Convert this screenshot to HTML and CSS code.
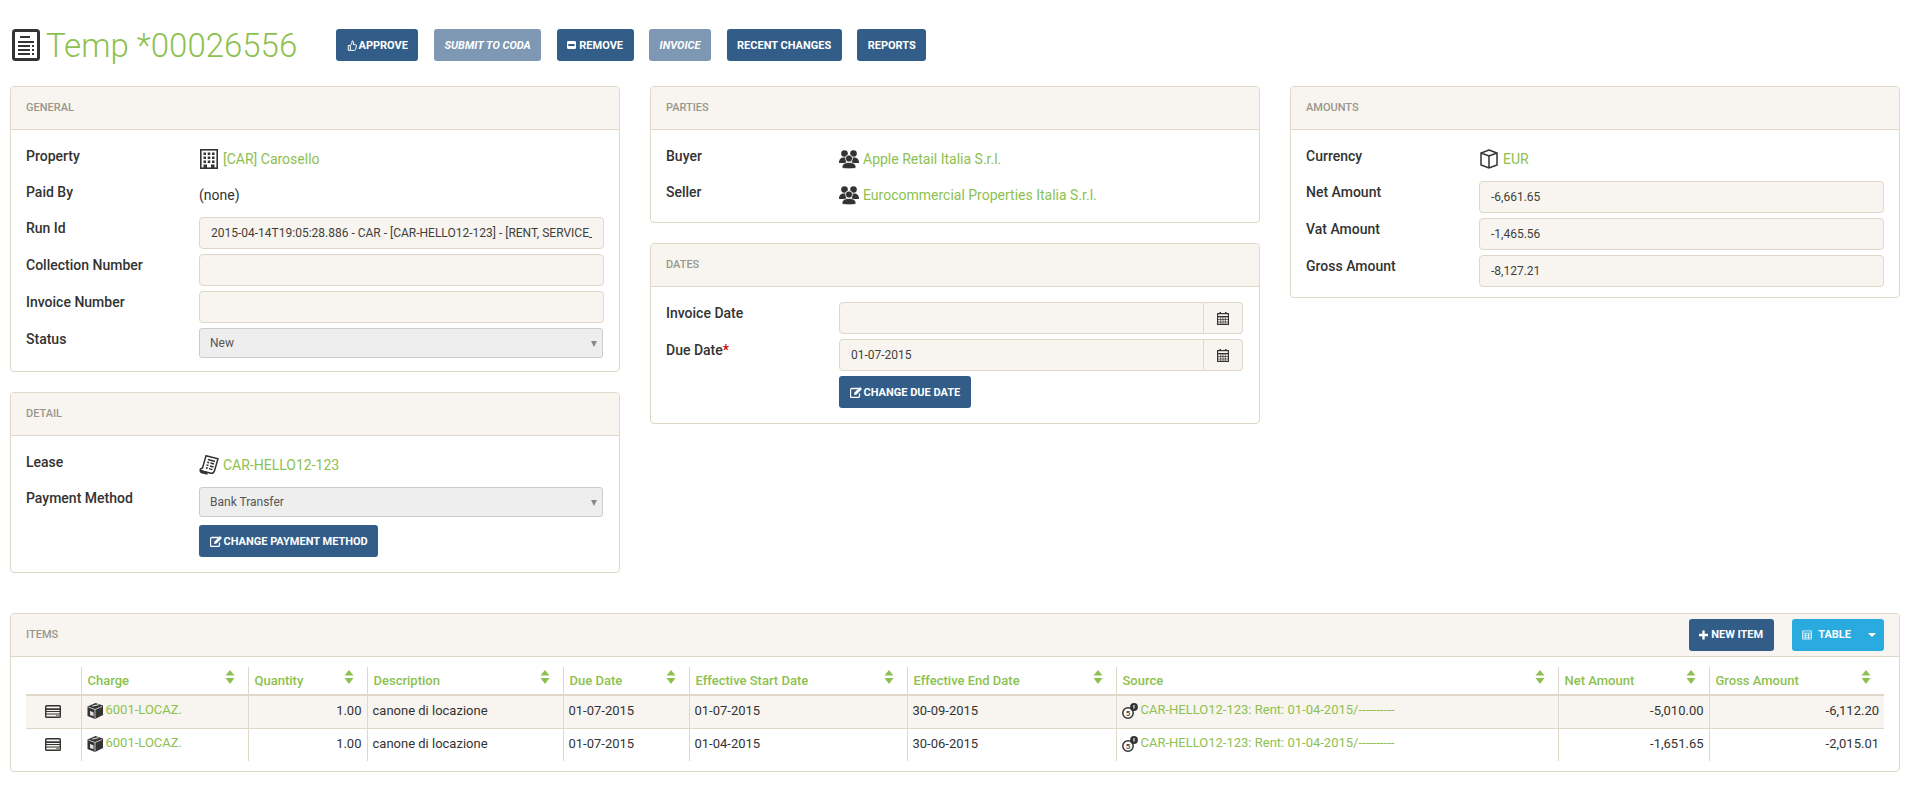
FILE: index.html
```html
<!DOCTYPE html>
<html lang="en">
<head>
<meta charset="UTF-8" />
<meta name="viewport" content="width=device-width, initial-scale=1" />
<title>Temp *00026556</title>
<link rel="stylesheet" href="styles.css">
</head>
<body>
  <svg class="icon-defs" aria-hidden="true">
    <symbol id="i-doc" viewBox="0 0 28 32">
      <rect x="1.500" y="1.500" width="25" height="29" rx="2" fill="none" stroke="#333" stroke-width="3"/>
      <path d="M8 8h10M6 13h16M6 17h12M20 17h2M6 21h12M20 21h2M6 25h12M20 25h2" stroke="#333" stroke-width="2" fill="none"/>
    </symbol>
    <symbol id="i-building" viewBox="0 0 20 20">
      <rect x="1.800" y=".8" width="16.400" height="18.400" fill="none" stroke="#333" stroke-width="1.600"/>
      <path d="M4.500 3.500h2.500v2.500H4.500zM8.700 3.500h2.600v2.500H8.700zM13 3.500h2.500v2.500H13zM4.500 7.500h2.500V10H4.500zM8.700 7.500h2.600V10H8.700zM13 7.500h2.500V10H13zM4.500 11.500h2.500V14H4.500zM8.700 11.500h2.600V14H8.700zM13 11.500h2.500V14H13zM4.500 15.500H8V19H4.500zM12 15.500h3.500V19H12z" fill="#333"/>
    </symbol>
    <symbol id="i-people" viewBox="0 0 20 20">
      <circle cx="5.500" cy="4.500" r="3.300" fill="#333"/>
      <circle cx="14.500" cy="4.500" r="3.300" fill="#333"/>
      <path d="M0 14c0-4 2-5.500 5-5.500S7 10 7 12v2zM20 14c0-4-2-5.500-5-5.500S13 10 13 12v2z" fill="#333"/>
      <circle cx="10" cy="9.500" r="3.600" fill="#333" stroke="#fff" stroke-width=".8"/>
      <path d="M3 19c0-4.500 3-5.500 7-5.500s7 1 7 5.500c-3 1-11 1-14 0z" fill="#333" stroke="#fff" stroke-width=".7"/>
    </symbol>
    <symbol id="i-lease" viewBox="0 0 20 20">
      <path d="M7 .8l12 3-3.500 12c-.5 1.700-1.700 2.700-3.500 2.500L2.500 16c-1-.3-1.500-1-1-2l2-1z" fill="#fff" stroke="#333" stroke-width="1.500"/>
      <path d="M9 4.500l7 2M8.200 7.200l2 .5M11.500 8l3.500 1M7.500 10l2 .5M11 11l3.500 1M6.800 12.800l2 .5M10 13.700l3.500 1" stroke="#333" stroke-width="1.400"/>
      <path d="M.8 14.500l7 2.300c1 .4 1 2 .5 3L3 18.500c-2-.5-3-2.200-2.200-4z" fill="#333"/>
    </symbol>
    <symbol id="i-cube" viewBox="0 0 20 20">
      <path d="M10 1l8 3v12l-8 3-8-3V4zM2 4l8 3 8-3M10 7v12" fill="none" stroke="#333" stroke-width="1.500"/>
    </symbol>
    <symbol id="i-box" viewBox="0 0 16 16">
      <path d="M8.500 0L16 2.500v9.500L8 16 .5 13V3.500z" fill="#333"/>
      <path d="M1.500 4L8 6.500 15 3.500M8 6.500V15.500" stroke="#fff" stroke-width=".7" fill="none"/>
      <path d="M3 8l3.500 1.300v4L3 12zM4.500 2.800l6.500-1.500 1.500.6-6.500 1.600z" fill="#ddd"/>
    </symbol>
    <symbol id="i-coins" viewBox="0 0 16 16">
      <circle cx="6" cy="10" r="5.200" fill="#fff" stroke="#333" stroke-width="1.500"/>
      <text x="6" y="12.700" class="coin-digit">5</text>
      <circle cx="12" cy="4" r="3.900" fill="#333"/>
      <path d="M12 2v3.600" stroke="#fff" stroke-width="1.100"/>
    </symbol>
    <symbol id="i-rows" viewBox="0 0 16 13">
      <rect x=".7" y=".7" width="14.600" height="11.600" rx=".8" fill="#f8f5f0" stroke="#333" stroke-width="1.400"/>
      <path d="M1 3.300h14v1.700H1z" fill="#333"/>
      <path d="M1 6.500h14M1 9h14" stroke="#333"/>
      <path d="M11 10.500h3" stroke="#888"/>
    </symbol>
    <symbol id="i-sort" viewBox="0 0 10 14">
      <path d="M5 0l4.500 5.500h-9zM.5 8h9L5 14z" fill="#8dc14f"/>
    </symbol>
    <symbol id="i-cal" viewBox="0 0 12 13">
      <path d="M2.500 0h1.500v2H2.500zM8 0h1.500v2H8z" fill="#333"/>
      <rect x=".6" y="1.600" width="10.800" height="10.800" fill="none" stroke="#333" stroke-width="1.200"/>
      <path d="M1 4h10v1.300H1z" fill="#333"/>
      <path d="M1 7.500h10M1 10h10M3.700 5v7M6 5v7M8.300 5v7" stroke="#333" stroke-width=".7"/>
    </symbol>
    <symbol id="i-thumb" viewBox="0 0 12 14">
      <path d="M1.500 7h2.500v5.800H1.500zM4 7l2-3V1.500c1.500 0 2 1 2 2.200L7.500 6h2.800c.9 0 1.200.7 1 1.500l-1 4.300c-.2.700-.6 1-1.300 1H4" fill="none" stroke="#fff" stroke-width="1.200"/>
    </symbol>
    <symbol id="i-minus" viewBox="0 0 10 10">
      <path d="M1.500.5h7A1.500 1.500 0 0 1 10 2v6a1.500 1.500 0 0 1-1.500 1.500h-7A1.500 1.500 0 0 1 0 8V2A1.500 1.500 0 0 1 1.500.5zM1.500 4v2h7V4z" fill="#fff" fill-rule="evenodd"/>
    </symbol>
    <symbol id="i-edit" viewBox="0 0 12 11">
      <path d="M8.500 1.500H2c-1 0-1.500.5-1.500 1.500v6c0 1 .5 1.500 1.500 1.500h6c1 0 1.500-.5 1.500-1.500V6.500" fill="none" stroke="#fff" stroke-width="1.300"/>
      <path d="M10 0l2 2-5.500 5.500L4 8l.5-2.500z" fill="#fff"/>
    </symbol>
    <symbol id="i-plus" viewBox="0 0 10 10">
      <path d="M3.700 0h2.600v3.700H10v2.600H6.300V10H3.700V6.300H0V3.700h3.700z" fill="#fff"/>
    </symbol>
    <symbol id="i-table" viewBox="0 0 11 10">
      <path d="M.5.500h10v9H.5zM.5 3h10M.5 5.200h10M.5 7.400h10M3.800 3v6.500M7.200 3v6.500" fill="none" stroke="#fff" stroke-width=".8"/>
    </symbol>
  </svg>

  <div class="page">
    <div class="title-bar">
      <h1><svg class="title-icon"><use href="#i-doc"/></svg>Temp *00026556</h1>
      <div class="actions">
        <a class="btn"><svg class="btn-icon thumb"><use href="#i-thumb"/></svg>Approve</a>
        <a class="btn disabled">Submit to Coda</a>
        <a class="btn"><svg class="btn-icon small"><use href="#i-minus"/></svg>Remove</a>
        <a class="btn disabled">Invoice</a>
        <a class="btn">Recent Changes</a>
        <a class="btn">Reports</a>
      </div>
    </div>

    <div class="columns">
      <div class="column">
        <div class="panel">
          <div class="panel-heading"><span>General</span></div>
          <div class="panel-body">
            <div class="field"><label>Property</label><div class="value"><svg class="obj-icon"><use href="#i-building"/></svg><a>[CAR] Carosello</a></div></div>
            <div class="field"><label>Paid By</label><div class="value">(none)</div></div>
            <div class="field"><label>Run Id</label><input type="text" readonly value="2015-04-14T19:05:28.886 - CAR - [CAR-HELLO12-123] - [RENT, SERVICE_CHARGE] - 2015-04-01"></div>
            <div class="field"><label>Collection Number</label><input type="text" readonly></div>
            <div class="field"><label>Invoice Number</label><input type="text" readonly></div>
            <div class="field"><label>Status</label><div class="select">New</div></div>
          </div>
        </div>

        <div class="panel">
          <div class="panel-heading"><span>Detail</span></div>
          <div class="panel-body">
            <div class="field"><label>Lease</label><div class="value"><svg class="obj-icon"><use href="#i-lease"/></svg><a>CAR-HELLO12-123</a></div></div>
            <div class="field"><label>Payment Method</label><div class="select">Bank Transfer</div></div>
            <div class="field"><label></label><div><a class="btn"><svg class="btn-icon"><use href="#i-edit"/></svg>Change Payment Method</a></div></div>
          </div>
        </div>
      </div>

      <div class="column">
        <div class="panel">
          <div class="panel-heading"><span>Parties</span></div>
          <div class="panel-body">
            <div class="field"><label>Buyer</label><div class="value"><svg class="obj-icon"><use href="#i-people"/></svg><a>Apple Retail Italia S.r.l.</a></div></div>
            <div class="field"><label>Seller</label><div class="value"><svg class="obj-icon"><use href="#i-people"/></svg><a>Eurocommercial Properties Italia S.r.l.</a></div></div>
          </div>
        </div>

        <div class="panel">
          <div class="panel-heading"><span>Dates</span></div>
          <div class="panel-body">
            <div class="field"><label>Invoice Date</label><div class="date-group"><input type="text" readonly><span class="addon"><svg class="cal-icon"><use href="#i-cal"/></svg></span></div></div>
            <div class="field"><label>Due Date<em>*</em></label><div class="date-group"><input type="text" readonly value="01-07-2015"><span class="addon"><svg class="cal-icon"><use href="#i-cal"/></svg></span></div></div>
            <div class="field"><label></label><div><a class="btn"><svg class="btn-icon"><use href="#i-edit"/></svg>Change Due Date</a></div></div>
          </div>
        </div>
      </div>

      <div class="column">
        <div class="panel">
          <div class="panel-heading"><span>Amounts</span></div>
          <div class="panel-body">
            <div class="field"><label>Currency</label><div class="value"><svg class="obj-icon"><use href="#i-cube"/></svg><a>EUR</a></div></div>
            <div class="field"><label>Net Amount</label><input type="text" readonly value="-6,661.65"></div>
            <div class="field"><label>Vat Amount</label><input type="text" readonly value="-1,465.56"></div>
            <div class="field"><label>Gross Amount</label><input type="text" readonly value="-8,127.21"></div>
          </div>
        </div>
      </div>
    </div>

    <div class="panel items">
      <div class="panel-heading">
        <span>Items</span>
        <div class="heading-actions">
          <a class="btn"><svg class="btn-icon small"><use href="#i-plus"/></svg>New Item</a>
          <a class="btn btn-info"><svg class="btn-icon small"><use href="#i-table"/></svg>Table<i class="caret"></i></a>
        </div>
      </div>
      <div class="table-wrap">
        <table>
          <colgroup>
            <col class="c-icon"><col class="c-charge"><col class="c-qty"><col class="c-desc"><col class="c-due">
            <col class="c-start"><col class="c-end"><col class="c-source"><col class="c-net"><col class="c-gross">
          </colgroup>
          <thead>
            <tr>
              <th></th>
              <th><div class="th-in">Charge<svg class="sort"><use href="#i-sort"/></svg></div></th>
              <th><div class="th-in">Quantity<svg class="sort"><use href="#i-sort"/></svg></div></th>
              <th><div class="th-in">Description<svg class="sort"><use href="#i-sort"/></svg></div></th>
              <th><div class="th-in">Due Date<svg class="sort"><use href="#i-sort"/></svg></div></th>
              <th><div class="th-in">Effective Start Date<svg class="sort"><use href="#i-sort"/></svg></div></th>
              <th><div class="th-in">Effective End Date<svg class="sort"><use href="#i-sort"/></svg></div></th>
              <th><div class="th-in">Source<svg class="sort"><use href="#i-sort"/></svg></div></th>
              <th><div class="th-in">Net Amount<svg class="sort"><use href="#i-sort"/></svg></div></th>
              <th><div class="th-in">Gross Amount<svg class="sort"><use href="#i-sort"/></svg></div></th>
            </tr>
          </thead>
          <tbody>
            <tr class="odd">
              <td class="center"><svg class="rows-icon"><use href="#i-rows"/></svg></td>
              <td><svg class="cell-icon"><use href="#i-box"/></svg><a>6001-LOCAZ.</a></td>
              <td class="num">1.00</td>
              <td>canone di locazione</td>
              <td>01-07-2015</td>
              <td>01-07-2015</td>
              <td>30-09-2015</td>
              <td><svg class="cell-icon"><use href="#i-coins"/></svg><a>CAR-HELLO12-123: Rent: 01-04-2015/----------</a></td>
              <td class="num">-5,010.00</td>
              <td class="num">-6,112.20</td>
            </tr>
            <tr>
              <td class="center"><svg class="rows-icon"><use href="#i-rows"/></svg></td>
              <td><svg class="cell-icon"><use href="#i-box"/></svg><a>6001-LOCAZ.</a></td>
              <td class="num">1.00</td>
              <td>canone di locazione</td>
              <td>01-07-2015</td>
              <td>01-04-2015</td>
              <td>30-06-2015</td>
              <td><svg class="cell-icon"><use href="#i-coins"/></svg><a>CAR-HELLO12-123: Rent: 01-04-2015/----------</a></td>
              <td class="num">-1,651.65</td>
              <td class="num">-2,015.01</td>
            </tr>
          </tbody>
        </table>
      </div>
    </div>
  </div>
</body>
</html>
```

FILE: styles.css
```css
* {
  box-sizing: border-box;
}
body {
  margin: 0;
  background: #fff;
  color: #333;
  font-family: Roboto, "Liberation Sans", sans-serif;
  font-size: 13px;
}
a {
  color: #8dc14f;
  text-decoration: none;
}
.icon-defs {
  display: none;
}
.page {
  padding: 29px 6px 15px 10px;
}

/* title row */
.title-bar {
  display: flex;
  align-items: center;
  height: 32px;
  margin-bottom: 25px;
}
h1 {
  display: flex;
  align-items: center;
  width: 326px;
  margin: 0;
  padding-left: 2px;
  color: #8dc14f;
  font-size: 33px;
  font-weight: 300;
  white-space: nowrap;
}
.title-icon {
  width: 28px;
  height: 32px;
  margin-right: 6px;
}
.actions {
  display: flex;
  gap: 15.5px;
}
.btn {
  display: inline-flex;
  align-items: center;
  height: 32px;
  padding: 0 10.5px;
  background: #325d88;
  border-radius: 3px;
  color: #fff;
  font-size: 11px;
  font-weight: 700;
  text-transform: uppercase;
  white-space: nowrap;
}
.btn.disabled {
  background: #7e97b3;
  font-style: italic;
}
.btn-info {
  background: #29abe0;
  padding-right: 8px;
}
.btn-icon {
  width: 12px;
  height: 11px;
  margin-right: 2px;
}
.btn-icon.thumb {
  width: 10px;
  height: 13px;
  margin-right: 2px;
}
.btn-icon.small {
  width: 9px;
  height: 10px;
  margin-right: 3px;
}
.btn-info .btn-icon.small {
  width: 10px;
  margin-right: 6px;
}
.caret {
  width: 0;
  height: 0;
  margin-left: 17px;
  border-top: 4px solid #fff;
  border-left: 4px solid transparent;
  border-right: 4px solid transparent;
}

/* panels */
.columns {
  display: grid;
  grid-template-columns: repeat(3, 1fr);
  gap: 30px;
}
.column {
  display: flex;
  flex-direction: column;
  gap: 20px;
}
.panel {
  background: #fff;
  border: 1px solid #dfd7ca;
  border-radius: 4px;
}
.panel-heading {
  display: flex;
  align-items: center;
  justify-content: space-between;
  height: 43px;
  padding: 0 15px 1px;
  background: #f8f5f0;
  border-bottom: 1px solid #dfd7ca;
  border-radius: 3px 3px 0 0;
  color: #98978b;
  font-size: 11px;
  font-weight: 500;
  text-transform: uppercase;
}
.heading-actions {
  display: flex;
  gap: 18px;
}
.panel-body {
  padding: 15px 15px 5px;
}
.field {
  display: grid;
  grid-template-columns: 173px 1fr;
  margin-bottom: 5px;
}
.field label {
  font-size: 14px;
  font-weight: 500;
  line-height: 23px;
}
.field em {
  color: #c00;
  font-style: normal;
}
.value {
  display: flex;
  align-items: center;
  height: 31px;
  padding-bottom: 4px;
  font-size: 14px;
}
.obj-icon {
  width: 20px;
  height: 20px;
  margin-right: 4px;
}
input[type=text] {
  width: 100%;
  height: 32px;
  padding: 0 11px;
  background: #f8f5f0;
  border: 1px solid #dfd7ca;
  border-radius: 4px;
  color: #3e3f3a;
  font-family: inherit;
  font-size: 12px;
}
.select {
  position: relative;
  height: 30px;
  margin: 0 1px 3px 0;
  padding: 0 10px;
  background: #eee;
  border: 1px solid #ccc;
  border-radius: 3px;
  color: #555;
  font-size: 12px;
  line-height: 28px;
}
.select::after {
  content: "";
  position: absolute;
  right: 5px;
  top: 12px;
  border-top: 6px solid #888;
  border-left: 3px solid transparent;
  border-right: 3px solid transparent;
}
.date-group {
  display: flex;
  margin-right: 1px;
}
.date-group input[type=text] {
  flex: 1;
  border-radius: 4px 0 0 4px;
}
.addon {
  display: flex;
  align-items: center;
  justify-content: center;
  width: 39px;
  background: #f8f5f0;
  border: 1px solid #dfd7ca;
  border-left: 0;
  border-radius: 0 4px 4px 0;
}
.cal-icon {
  width: 12px;
  height: 13px;
}
.field .btn {
  margin-bottom: 5px;
}

/* items table */
.items {
  margin-top: 40px;
}
.table-wrap {
  padding: 10px 15px;
}
table {
  width: 100%;
  table-layout: fixed;
  border-collapse: collapse;
}
.c-icon { width: 55px; }
.c-charge { width: 167px; }
.c-qty { width: 119px; }
.c-desc { width: 196px; }
.c-due { width: 126px; }
.c-start { width: 218px; }
.c-end { width: 209px; }
.c-source { width: 442px; }
.c-net { width: 151px; }
.c-gross { width: 175px; }
th {
  height: 28px;
  padding: 0 5px 0 6px;
  border-bottom: 2px solid #dfd7ca;
  color: #8dc14f;
  font-size: 13px;
  font-weight: 500;
  text-align: left;
}
th + th,
td + td {
  border-left: 1px solid #dfd7ca;
}
.th-in {
  display: flex;
  justify-content: space-between;
  padding-right: 8px;
}
.sort {
  width: 10px;
  height: 14px;
  margin-top: -3px;
}
td {
  height: 33px;
  padding: 0 5px 3px;
  border-bottom: 1px solid #dfd7ca;
  white-space: nowrap;
  overflow: hidden;
}
tbody tr:last-child td {
  border-bottom: 0;
}
.odd td {
  background: #f8f5f0;
}
td.num {
  text-align: right;
}
td.center {
  text-align: center;
}
.rows-icon {
  width: 16px;
  height: 13px;
  vertical-align: middle;
}
.cell-icon {
  width: 16px;
  height: 16px;
  margin-right: 3px;
  vertical-align: middle;
}
.coin-digit {
  font-family: Roboto, sans-serif;
  font-size: 8px;
  font-weight: 500;
  fill: #333;
  text-anchor: middle;
}
```
